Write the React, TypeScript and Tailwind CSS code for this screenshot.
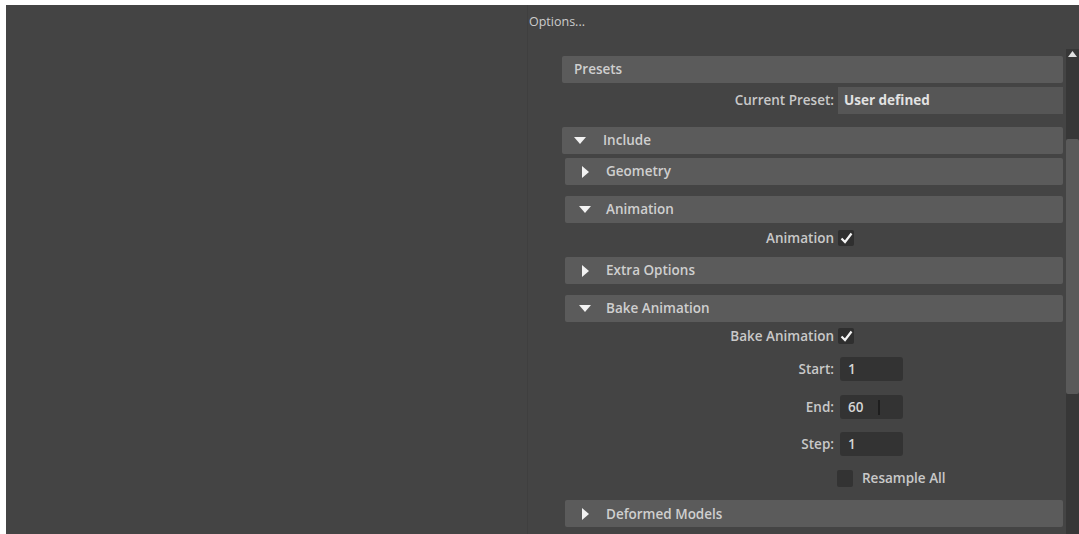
import { ReactNode } from "react";

const font = { fontFamily: '"Open Sans", "Noto Sans", sans-serif' };

function Header({ title, open, indent }: { title: string; open: boolean; indent?: boolean }) {
  return (
    <div
      className={`flex items-center h-[27px] bg-[#5b5b5b] rounded-[2px] text-[13.5px] font-semibold text-[#cfcfcf] ${indent ? "ml-[3px] pl-[14px]" : "pl-[12px]"}`}
    >
      <span className="w-[12px] flex items-center justify-center">
        {open ? (
          <svg width="12" height="8" viewBox="0 0 12 8">
            <polygon points="0,0 12,0 6,7" fill="#f2f2f2" />
          </svg>
        ) : (
          <svg width="7" height="12" viewBox="0 0 7 12">
            <polygon points="0,0 7,6 0,12" fill="#f2f2f2" />
          </svg>
        )}
      </span>
      <span className={open && !indent ? "ml-[17px]" : "ml-[15px]"}>{title}</span>
    </div>
  );
}

function Row({ label, children }: { label: string; children: ReactNode }) {
  return (
    <div className="flex items-center">
      <div className="w-[276px] text-right pr-[4px] text-[13.5px] font-semibold text-[#c9c9c9]">{label}</div>
      {children}
    </div>
  );
}

function Check() {
  return (
    <div className="w-[16px] h-[16px] bg-[#2f2f2f] rounded-[2px] flex items-center justify-center">
      <svg width="13" height="12" viewBox="0 0 13 12">
        <path d="M1.5 6.5 L5 10 L11.5 1.5" stroke="#f4f4f4" strokeWidth="2.2" fill="none" />
      </svg>
    </div>
  );
}

function Field({ value, cursor }: { value: string; cursor?: boolean }) {
  return (
    <div className="relative ml-[2px] w-[63px] h-[24px] bg-[#333333] rounded-[3px] flex items-center pl-[8px] text-[13.5px] font-semibold text-[#d6d6d6]">
      {value}
      {cursor && <span className="absolute left-[38px] top-[5px] w-[2px] h-[15px] bg-[#1e1e1e]" />}
    </div>
  );
}

export default function App() {
  return (
    <div className="w-[1079px] h-[534px] bg-white pt-[5px] pl-[6px] overflow-hidden" style={font}>
      <div className="flex h-full bg-[#444444]">
        <div className="w-[521px] shrink-0" />
        <div className="flex-1 flex flex-col border-l border-[#3f3f3f]">
          <div className="h-[36px] pl-[1px] pt-[8px] text-[12.5px] text-[#cccccc]">Options...</div>
          <div className="flex flex-1 min-h-0">
            <div className="ml-[34px] w-[501px] flex flex-col">
              <div className="mt-[15px]">
                <div className="flex items-center h-[27px] bg-[#5b5b5b] rounded-[2px] pl-[12px] text-[13.5px] font-semibold text-[#cfcfcf]">
                  Presets
                </div>
              </div>
              <div className="mt-[4px] flex items-center h-[27px]">
                <div className="w-[276px] text-right pr-[4px] text-[13.5px] font-semibold text-[#c9c9c9]">Current Preset:</div>
                <div className="flex-1 h-[27px] bg-[#565656] flex items-center pl-[6px] text-[13.5px] font-bold text-[#e2e2e2]">
                  User defined
                </div>
              </div>
              <div className="mt-[13px]">
                <Header title="Include" open />
              </div>
              <div className="mt-[4px]">
                <Header title="Geometry" open={false} indent />
              </div>
              <div className="mt-[11px]">
                <Header title="Animation" open indent />
              </div>
              <div className="mt-[5px] h-[22px]">
                <Row label="Animation">
                  <Check />
                </Row>
              </div>
              <div className="mt-[7px]">
                <Header title="Extra Options" open={false} indent />
              </div>
              <div className="mt-[11px]">
                <Header title="Bake Animation" open indent />
              </div>
              <div className="mt-[4px] h-[22px]">
                <Row label="Bake Animation">
                  <Check />
                </Row>
              </div>
              <div className="mt-[9px]">
                <Row label="Start:">
                  <Field value="1" />
                </Row>
              </div>
              <div className="mt-[14px]">
                <Row label="End:">
                  <Field value="60" cursor />
                </Row>
              </div>
              <div className="mt-[13px]">
                <Row label="Step:">
                  <Field value="1" />
                </Row>
              </div>
              <div className="mt-[12px] flex items-center">
                <div className="w-[275px]" />
                <div className="w-[16px] h-[17px] bg-[#333333] rounded-[2px]" />
                <span className="ml-[9px] text-[13.5px] font-semibold text-[#c9c9c9]">Resample All</span>
              </div>
              <div className="mt-[12px]">
                <Header title="Deformed Models" open={false} indent />
              </div>
            </div>
            <div className="ml-[3px] mt-[8px] w-[13px] flex flex-col bg-[#373737]">
              <div className="h-[10px] flex items-center justify-center">
                <svg width="9" height="6" viewBox="0 0 9 6">
                  <polygon points="0,6 9,6 4.5,0" fill="#e0e0e0" />
                </svg>
              </div>
              <div className="mt-[80px] h-[255px] bg-[#5a5a5a] rounded-[2px]" />
            </div>
          </div>
        </div>
      </div>
    </div>
  );
}
